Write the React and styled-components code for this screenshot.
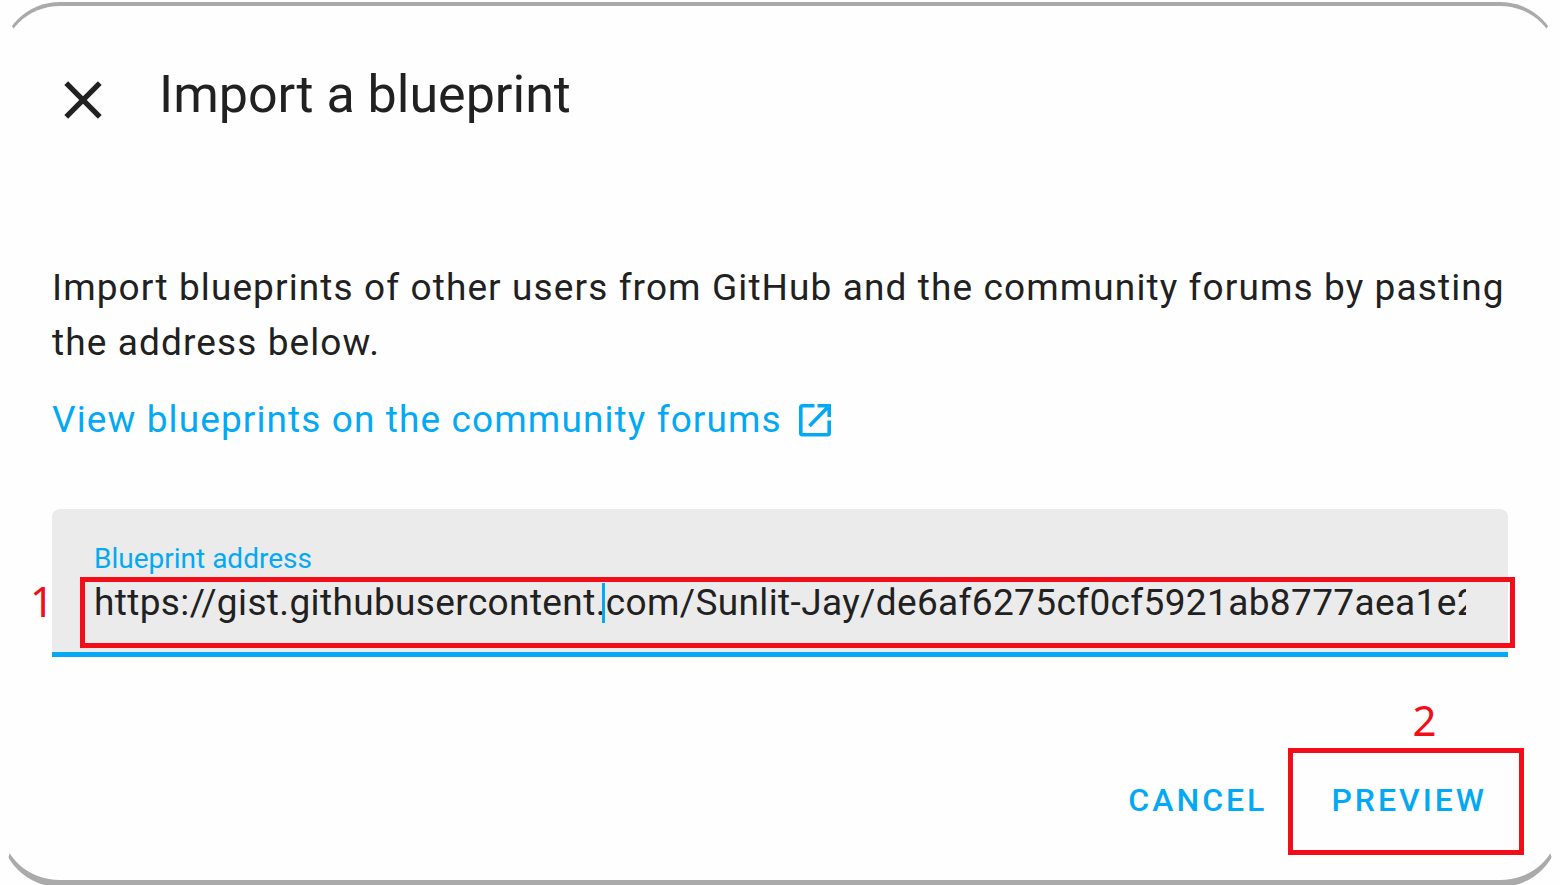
import React, { useState } from "react";
import styled, { createGlobalStyle } from "styled-components";

const GlobalStyle = createGlobalStyle`
  * {
    box-sizing: border-box;
  }
  body {
    margin: 0;
    background: #fefefe;
    color: #212121;
    font-family: Roboto, "Liberation Sans", sans-serif;
  }
`;

const App = () => {
  const [address, setAddress] = useState(
    "https://gist.githubusercontent.com/Sunlit-Jay/de6af6275cf0cf5921ab8777aea1e2b4"
  );
  const onChange = (e) => setAddress(e.target.value);
  const onSubmit = (e) => e.preventDefault();
  return (
    <Page>
      <GlobalStyle />
      <Dialog aria-labelledby="dialog-title" onSubmit={onSubmit}>
        <Header>
          <CloseButton type="button" aria-label="Close">
            <CloseIcon />
          </CloseButton>
          <Title id="dialog-title">Import a blueprint</Title>
        </Header>
        <Content>
          <Text>
            Import blueprints of other users from GitHub and the community
            forums by pasting the address below.
          </Text>
          <ForumLink href="#forums">
            View blueprints on the community forums
            <OpenIcon />
          </ForumLink>
          <Field>
            <Label htmlFor="address">Blueprint address</Label>
            <InputWrap>
              <Input
                id="address"
                type="text"
                spellCheck={false}
                value={address}
                onChange={onChange}
              />
              <Caret />
            </InputWrap>
            <FieldMark />
            <StepOne>1</StepOne>
          </Field>
        </Content>
        <Actions>
          <Button type="button">Cancel</Button>
          <Marked>
            <Button type="submit">Preview</Button>
            <ButtonMark />
            <StepTwo>2</StepTwo>
          </Marked>
        </Actions>
      </Dialog>
    </Page>
  );
};

const CloseIcon = () => (
  <svg width="64" height="64" viewBox="0 0 24 24" fill="currentColor">
    <path d="M19 6.41L17.59 5L12 10.59L6.41 5L5 6.41L10.59 12L5 17.59L6.41 19L12 13.41L17.59 19L19 17.59L13.41 12L19 6.41Z" />
  </svg>
);

const OpenIcon = () => (
  <svg width="34" height="34" viewBox="0 0 34 34" fill="none" stroke="currentColor" strokeWidth="3.6">
    <path d="M16.5 2.8H4.5Q2.8 2.8 2.8 4.5V30Q2.8 31.7 4.5 31.7H29.5Q31.2 31.7 31.2 30V17.5" />
    <path d="M19.5 2.8H31.2V14M31.2 2.8L11.5 23" />
  </svg>
);

const Page = styled.main`
  min-height: 100vh;
  height: 100vh;
  padding-top: 2px;
  overflow: hidden;
`;

const Dialog = styled.form`
  display: flex;
  flex-direction: column;
  min-height: 100vh;
  padding: 50px 50px 25px;
  border: 2px solid transparent;
  border-top: 4px solid #aaa;
  border-bottom: 7px solid #aaa;
  border-radius: 60px;
`;

const Header = styled.header`
  display: flex;
  align-items: center;
  gap: 44px;
  margin-left: -1px;
`;

const CloseButton = styled.button`
  display: flex;
  padding: 0;
  border: 0;
  background: none;
  color: inherit;
  cursor: pointer;
`;

const Title = styled.h1`
  margin: 0 0 10px;
  font-size: 52px;
  font-weight: 400;
  line-height: 78px;
`;

const Content = styled.section`
  padding-top: 116px;
`;

const Text = styled.p`
  margin: 0 0 22px;
  font-size: 37px;
  line-height: 55px;
  letter-spacing: 0.03em;
`;

const ForumLink = styled.a`
  display: inline-flex;
  align-items: center;
  gap: 16px;
  color: #03a9f4;
  font-size: 37px;
  line-height: 55px;
  letter-spacing: 0.03em;
  text-decoration: none;
`;

const Field = styled.div`
  position: relative;
  height: 148px;
  margin-top: 62px;
  padding: 32px 42px 0;
  border-bottom: 5px solid #03a9f4;
  border-radius: 8px 8px 0 0;
  background: #ebebeb;
`;

const Label = styled.label`
  display: block;
  color: #03a9f4;
  font-size: 28px;
  line-height: 36px;
`;

const InputWrap = styled.div`
  position: relative;
`;

const Input = styled.input`
  display: block;
  width: 100%;
  height: 50px;
  padding: 0;
  border: 0;
  outline: 0;
  background: none;
  color: inherit;
  font-family: inherit;
  font-size: 37px;
  letter-spacing: 0.01em;
`;

const Caret = styled.span`
  position: absolute;
  top: 6px;
  left: 508px;
  width: 3px;
  height: 40px;
  background: #03a9f4;
`;

const Mark = styled.div`
  position: absolute;
  border: 5px solid #f20d18;
  pointer-events: none;
`;

const FieldMark = styled(Mark)`
  top: 68px;
  right: -7px;
  bottom: 4px;
  left: 28px;
`;

const ButtonMark = styled(Mark)`
  inset: 0;
`;

const Step = styled.span`
  position: absolute;
  color: #f20d18;
  font-family: "Noto Sans", sans-serif;
  font-size: 42px;
  line-height: 56px;
`;

const StepOne = styled(Step)`
  top: 64px;
  left: -22px;
`;

const StepTwo = styled(Step)`
  bottom: 100%;
  left: 124px;
`;

const Actions = styled.footer`
  display: flex;
  justify-content: flex-end;
  align-items: center;
  gap: 1px;
  margin-top: auto;
  margin-right: -16px;
`;

const Marked = styled.div`
  position: relative;
  padding: 0 17px 0 23px;
`;

const Button = styled.button`
  height: 107px;
  padding: 0 20px 4px;
  border: 0;
  background: none;
  color: #03a9f4;
  font-family: inherit;
  font-size: 32px;
  font-weight: 500;
  letter-spacing: 3px;
  text-transform: uppercase;
  cursor: pointer;
`;

export default App;
